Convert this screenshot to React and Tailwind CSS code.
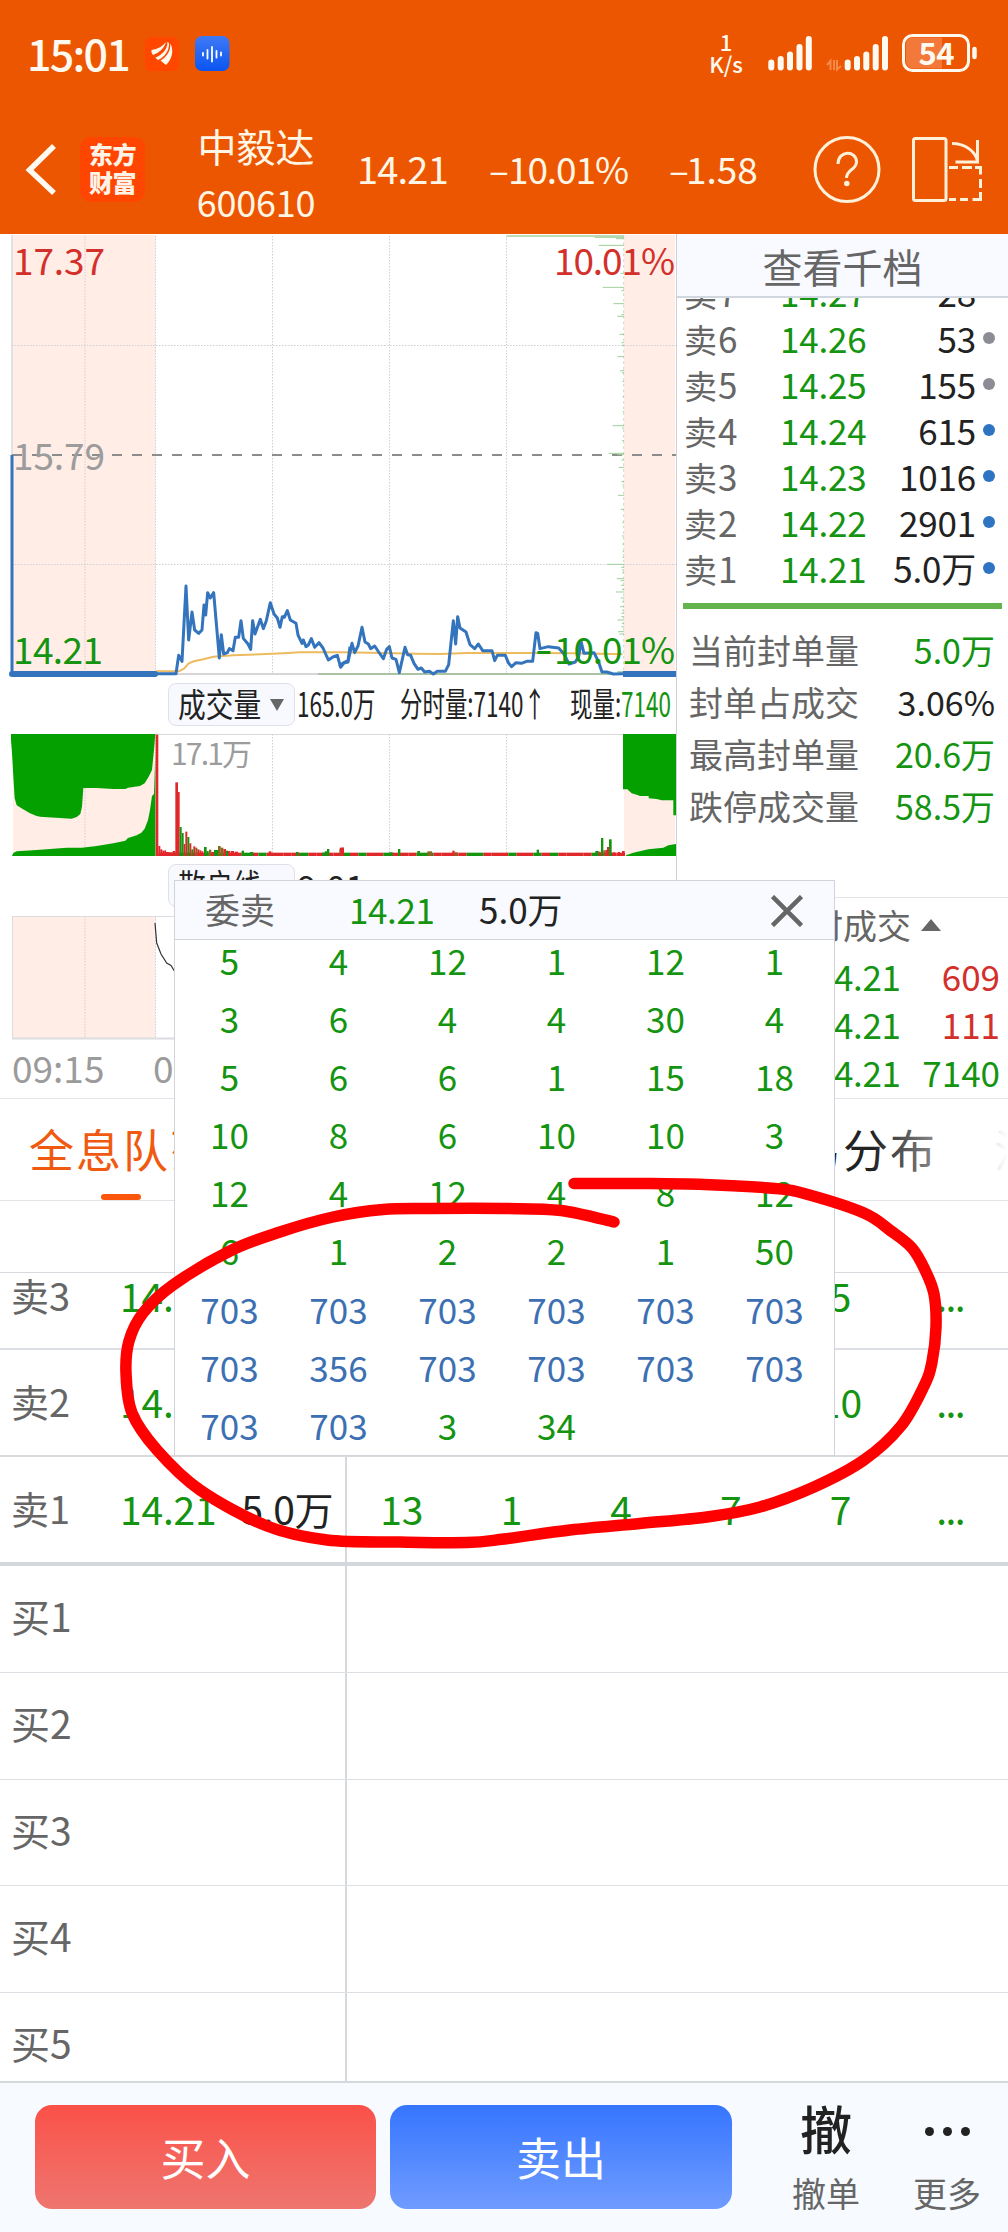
import React from "react";

const PRICE_A =
  "36,675 36,1331 528,1331 536,1276 546,1294 558,1068 566,1230 576,1146 584,1200 596,1210 606,1200 612,1125 617,1155 623,1088 631,1104 641,1088 658,1284 664,1214 671,1272 682,1268 688,1256 699,1262 706,1222 716,1222 723,1172 730,1225 744,1242 752,1258 758,1172 765,1212 781,1168 790,1196 799,1172 811,1118 822,1152 832,1164 840,1192 847,1160 853,1162 862,1142 871,1170 888,1180 894,1215 906,1240 910,1230 918,1250 925,1245 934,1226 944,1252 957,1238 969,1254 977,1272 985,1290 1000,1280 1012,1276 1022,1312 1032,1298 1044,1292 1050,1250";
const PRICE_B =
  "-2,1310 8,1300 24,1296 36,1240 44,1268 54,1248 66,1192 75,1236 85,1242 92,1256 104,1248 116,1266 130,1286 140,1258 148,1250 156,1284 168,1288 178,1328 195,1252 203,1274 212,1276 222,1300 234,1318 244,1314 254,1326 268,1324 280,1332 292,1324 316,1324 326,1304 340,1172 347,1242 353,1160 360,1194 378,1206 390,1244 404,1256 415,1242 428,1262 456,1262 464,1292 472,1276 496,1276 506,1300 515,1310 528,1298 544,1300 560,1294 578,1294 588,1208 593,1210 600,1256 625,1250 656,1254 672,1272 687,1302 706,1296 716,1280 723,1234 732,1270 762,1268 775,1294 786,1326 800,1326 820,1332 850,1331";

const TICKS = [
  [22, 88], [26, 24], [46, 76], [130, 10], [172, 64], [182, 8], [221, 32], [259, 20], [254, 8], [313, 14], [338, 8],
  [346, 6], [380, 20], [422, 12], [428, 6], [455, 5], [500, 4], [545, 4], [587, 34], [594, 6], [632, 6], [670, 46],
  [674, 20], [690, 8], [712, 16], [755, 8], [765, 5], [796, 18], [838, 10], [878, 5], [918, 6], [942, 5], [965, 4],
  [982, 5], [1003, 50], [1012, 8], [1020, 6], [1028, 5], [1046, 22], [1052, 10], [1066, 9], [1078, 6], [1086, 24],
  [1104, 10], [1116, 6], [1130, 12], [1140, 6], [1150, 8], [1160, 8], [1170, 20], [1180, 6], [1190, 8], [1205, 18],
  [1212, 14], [1325, 20], [1328, 16],
];

const RED = "#e0282a";
const GREEN = "#149410";
const MIX = "#87661f";
const VOL_A = [
  [467, 194, 8, RED], [475, 528, 6, RED], [481, 538, 6, RED], [487, 542, 6, RED], [493, 541, 5, RED], [498, 546, 10, RED],
  [508, 547, 10, RED], [518, 543, 8, RED], [526, 337, 8, RED], [533, 366, 6, RED], [539, 471, 6, GREEN], [545, 489, 6, GREEN],
  [551, 522, 5, RED], [556, 485, 6, RED], [562, 501, 6, GREEN], [568, 520, 6, RED], [574, 538, 6, GREEN], [580, 529, 6, RED],
  [586, 533, 6, MIX], [592, 538, 6, RED], [598, 541, 6, RED], [604, 544, 6, RED], [612, 531, 8, GREEN], [620, 543, 6, GREEN],
  [627, 539, 7, MIX], [634, 546, 8, RED], [642, 540, 12, GREEN], [654, 528, 8, MIX], [662, 533, 8, MIX], [670, 537, 8, RED],
  [678, 542, 6, GREEN], [684, 543, 6, RED], [692, 543, 10, RED], [704, 545, 10, RED], [725, 542, 7, GREEN], [750, 546, 10, GREEN],
  [806, 544, 8, RED], [888, 546, 8, GREEN], [966, 548, 8, GREEN], [974, 544, 7, GREEN], [981, 537, 7, GREEN], [1018, 536, 6, MIX],
  [1024, 533, 8, RED],
];
const VOL_B = [
  [0, 533, 12, RED], [148, 547, 10, GREEN], [174, 537, 7, GREEN], [232, 543, 8, GREEN], [262, 544, 14, MIX], [337, 542, 7, RED],
  [344, 547, 8, MIX], [590, 539, 7, GREEN], [766, 543, 10, GREEN], [776, 545, 6, RED], [783, 504, 7, GREEN], [790, 541, 6, MIX],
  [796, 540, 6, RED], [801, 531, 6, RED], [807, 508, 8, GREEN], [818, 547, 8, RED], [834, 546, 6, RED], [846, 543, 8, RED],
];

// A base row of short alternating bars along the bottom of the volume pane.
const BASE = Array.from({ length: 56 }, (_, i) => [475 + i * 25, i % 5 === 2 || i % 7 === 3 ? GREEN : RED]);

const RING = [
  [574, 1183.5], [640, 1183.5], [704, 1184.5], [775, 1188.5], [806, 1194], [864, 1213], [891, 1231], [912, 1248], [925, 1270],
  [934, 1294], [936, 1327], [932, 1362], [924, 1386], [901, 1426], [864, 1460], [814, 1487], [760, 1507], [707, 1517],
  [640, 1523.5], [570, 1530], [504, 1539], [467, 1542.5], [400, 1542], [327, 1540], [267, 1526], [200, 1490], [157, 1450],
  [132, 1413], [126, 1373], [129, 1341], [143, 1313], [173, 1285], [230, 1251], [280, 1232], [333, 1217], [383, 1209.5],
  [430, 1208.5], [504, 1208.5], [561, 1210.5], [614, 1222],
];

function smooth(pts) {
  let d = `M${pts[0][0]} ${pts[0][1]}`;
  for (let i = 0; i < pts.length - 1; i++) {
    const a = pts[i - 1] || pts[i];
    const b = pts[i];
    const c = pts[i + 1];
    const e = pts[i + 2] || c;
    d += `C${b[0] + (c[0] - a[0]) / 6} ${b[1] + (c[1] - a[1]) / 6} ${c[0] - (e[0] - b[0]) / 6} ${c[1] - (e[1] - b[1]) / 6} ${c[0]} ${c[1]}`;
  }
  return d;
}

function StatusBar() {
  return (
    <div className="flex h-[108px] items-start text-[#fffaf0]">
      <div className="ml-[27px] mt-[30px] w-[118px] text-[43px] font-medium leading-[44px] tracking-[-1.8px]">15:01</div>
      <svg className="mt-[37px]" width="34" height="34" viewBox="0 0 34 34">
        <rect width="34" height="34" rx="6" fill="#ff4700" />
        <g fill="#fff8ec">
          <path d="M6.500 13 C13 12 18 9 21 5 C19.500 11 14 16 8 18 C6.500 16.500 6.300 14.800 6.500 13z" />
          <path d="M22.300 5 C23 12 17 18 10.500 20.500 C10.800 21 12 22.500 13 23 C20 20 24.500 13 24 6z" />
          <path d="M25.300 6.500 C26 14 21 20.500 15.500 23.500 L21 28 C26.500 23 29.500 14 25.300 6.500z" />
        </g>
      </svg>
      <svg className="ml-4 mt-9" width="35" height="35" viewBox="0 0 35 35">
        <defs>
          <linearGradient id="voice" x1="0" y1="0" x2="0" y2="1">
            <stop offset="0" stopColor="#3f79f5" />
            <stop offset="1" stopColor="#0a55f2" />
          </linearGradient>
        </defs>
        <rect width="34.500" height="35" rx="7" fill="url(#voice)" />
        <path d="M8 17v2.500M12.500 14v8.500M17 11v14.500M21.500 15v6.500M26 16.500v3" stroke="#fff" strokeWidth="1.800" strokeLinecap="round" />
      </svg>
      <div className="ml-[478px] mt-[31px] flex w-[36px] flex-col items-center text-[22px] font-medium leading-[21.500px]">
        <span>1</span>
        <span>K/s</span>
      </div>
      <svg className="ml-[22px] mt-[30px]" width="216" height="48" viewBox="766 30 216 48">
        <g stroke="#fffaf0" strokeWidth="6" strokeLinecap="round">
          <path d="M771.300 62.500v5M780.700 59v8.500M790 54.500v13M799.500 47v20.500M808.800 39v28.500" />
          <path d="M847.700 62.500v5M857 59v8.500M866.300 54.500v13M875.700 47v20.500M885 39v28.500" />
        </g>
        <path d="M827 65l3.500-4v9M834 60v10M837 60v9.500l4-3.500" fill="none" stroke="#f58a4a" strokeWidth="2" />
        <rect x="903.500" y="35.500" width="65" height="35" rx="9" fill="none" stroke="#fffaf0" strokeWidth="3" />
        <path d="M942 37.500h-29a7 7 0 0 0-7 7v17a7 7 0 0 0 7 7h29z" fill="#f2793a" />
        <path d="M974.500 49v8" stroke="#fffaf0" strokeWidth="4.500" strokeLinecap="round" />
        <text x="918.500" y="64.500" fontSize="31" fontWeight="700" fill="#fffaf0" textLength="36">54</text>
      </svg>
    </div>
  );
}

function NavBar() {
  return (
    <div className="flex h-[126px] items-start text-[#fff6e6]">
      <svg className="ml-[22px] mt-[30px]" width="40" height="64" viewBox="22 138 40 64">
        <path d="M54 146 L29.500 170 L54 193" fill="none" stroke="#fffaf2" strokeWidth="5.500" />
      </svg>
      <div className="ml-[18px] mt-[29px] flex h-[65px] w-[65px] flex-col items-center justify-center rounded-[11px] bg-[#ff4600] pb-1 text-[24px] font-black leading-[28px] tracking-[-0.5px] text-[#fff3e8]">
        <span>东方</span>
        <span>财富</span>
      </div>
      <div className="ml-[39px] mt-[9px] flex w-[144px] flex-col items-center">
        <span className="h-[56px] text-[39px] leading-[56px]">中毅达</span>
        <span className="text-[36px] leading-[56px] tracking-[-0.2px]">600610</span>
      </div>
      <div className="ml-[29px] mt-[34px] w-[132px] text-[38px] leading-[52px] tracking-[-0.8px]">14.21</div>
      <div className="mt-[34px] w-[180px] text-[37px] leading-[52px] tracking-[-1.1px]"><span className="mr-[1px] inline-block w-[18px] text-center">–</span>10.01%</div>
      <div className="mt-[34px] w-[140px] text-[37px] leading-[52px]"><span className="mr-[-1px] inline-block w-[18px] text-center">–</span>1.58</div>
      <svg className="mt-[26px]" width="180" height="70" viewBox="811 134 180 70">
        <g fill="none" stroke="#fff0da" strokeWidth="3">
          <circle cx="849" cy="169.500" r="32" />
          <path d="M840 164 C840 150 858.500 150 858.500 162 C858.500 170 848.500 169 848.500 178" />
          <rect x="915.500" y="138.500" width="32.500" height="62" rx="2" />
          <path d="M954 143.500 C968 143.500 977.500 152 979.500 161M979.500 140v22h-22" />
          <path d="M951 167.500h9M964 167.500h10M977 167.500h5.500v7M982.500 179v9M982.500 192v7.500h-8M970 199.500h-8M958 199.500h-7" />
        </g>
        <circle cx="848.800" cy="183.500" r="2.800" fill="#fff0da" />
      </svg>
    </div>
  );
}

function Grid({ top, bottom }) {
  return (
    <g stroke="#cfcfd4" strokeWidth="1" strokeDasharray="1.500 1.500">
      {[85, 155.500, 272.500, 389.500, 506.500].map((x) => (
        <path key={x} d={`M${x} ${top}V${bottom}`} />
      ))}
    </g>
  );
}

function PriceChart() {
  return (
    <svg className="block" width="676" height="446" viewBox="0 234 676 446" fontSize="37">
      <rect x="13" y="235" width="142.500" height="438" fill="#ffede6" />
      <rect x="624" y="235" width="51" height="438" fill="#ffede6" />
      <path d="M12 235V674" stroke="#d9d9de" strokeWidth="1.500" />
      <Grid top={236} bottom={674} />
      <path d="M12 345.500H676M12 564.500H676" stroke="#cfcfd4" strokeDasharray="1.500 1.500" />
      <path d="M12 455H676" stroke="#8c8c8c" strokeWidth="2" strokeDasharray="10 10" />
      <path d="M155 674H320" stroke="#d6d6d6" strokeWidth="2" />
      <path d="M318 674H624" stroke="#a9c3a4" strokeWidth="2" />
      <path d="M506.500 236H624" stroke="#bcdcb6" strokeWidth="2" />
      <g transform="translate(340 230) scale(0.33333)" stroke="#9fcf9c" strokeWidth="3">
        {TICKS.map(([y, w], i) => (
          <path key={i} d={`M${852 - w} ${y}H852`} />
        ))}
        <path d="M851 20V1330" strokeWidth="2" strokeDasharray="8 9" />
      </g>
      <g fill="none" stroke="#ecbb5e" strokeWidth="6" strokeLinejoin="round">
        <polyline transform="translate(0 230) scale(0.33333)" points="467,1324 536,1324 552,1316 566,1300 584,1293 610,1288 640,1280 700,1276 780,1273 850,1270 900,1267 1020,1267 1150,1269 1250,1271 1320,1272 1400,1269 1600,1269 1720,1270 1800,1271 1868,1273" />
      </g>
      <g fill="none" stroke="#3474bd" strokeLinejoin="round">
        <polyline transform="translate(0 230) scale(0.33333)" strokeWidth="9" points={PRICE_A} />
        <polyline transform="translate(340 230) scale(0.33333)" strokeWidth="9" points={PRICE_B} />
        <path d="M12 674H155" strokeWidth="6" strokeLinecap="round" />
        <path d="M623 674H676" strokeWidth="6" />
      </g>
      <text x="13" y="275" fill="#d3302b" textLength="92">17.37</text>
      <text x="13" y="470" fill="#9c9c9c" textLength="92">15.79</text>
      <text x="13" y="664" fill={GREEN} textLength="90">14.21</text>
      <text x="554" y="275" fill="#d3302b" textLength="121">10.01%</text>
      <text x="554" y="664" fill={GREEN} textLength="121">10.01%</text>
      <path d="M537.500 652.500h13" stroke={GREEN} strokeWidth="3" />
    </svg>
  );
}

function VolumeChart() {
  return (
    <svg className="block" width="676" height="124" viewBox="0 733 676 124">
      <rect x="13" y="734" width="142.500" height="122" fill="#ffede6" />
      <rect x="624" y="734" width="51" height="122" fill="#ffede6" />
      <path d="M12 734.500H676" stroke="#d9d9de" />
      <Grid top={734} bottom={856} />
      <g transform="translate(0 670) scale(0.33333)" fill="#03a000">
        <path d="M33 192H466L462 240 456 300 446 320 434 340 420 348 384 353 376 357H340L290 354H250L246 410 241 432 230 441 215 446 120 440 108 437 90 430 68 417 50 406 44 385 40 320 36 250 33 210z" />
        <path d="M36 558L40 549 50 544 110 540 160 536 200 533H245L290 528 340 520 376 512 384 504 410 496 424 488 434 476 444 450 450 420 456 378 462 372 466 250V558z" />
        {BASE.map(([x, c]) => (
          <rect key={x} x={x} y="548" width="25" height="10" fill={c} />
        ))}
        {VOL_A.map(([x, y, w, c], i) => (
          <rect key={i} x={x} y={y} width={w} height={558 - y} fill={c} />
        ))}
      </g>
      <g transform="translate(340 670) scale(0.33333)">
        {VOL_B.map(([x, y, w, c], i) => (
          <rect key={i} x={x} y={y} width={w} height={558 - y} fill={c} />
        ))}
        <path d="M849 192H1008V436H1000V391H965L950 387 926 385V378L900 378 890 374 875 370 862 358H849z" fill="#03a000" />
        <path d="M858 556L880 548 925 538 970 533 985 526 1008 522V558H858z" fill="#03a000" />
      </g>
      <text x="171" y="765" fontSize="30" fill="#9c9c9c" textLength="81">17.1万</text>
    </svg>
  );
}

function Selector({ label }) {
  return (
    <div className="flex h-[43px] w-[127px] shrink-0 items-center rounded-lg border border-[#dfe1ea] bg-[#f7f9ff] pl-[9px]">
      <span className="inline-block w-[84px] origin-left scale-x-[0.84] whitespace-nowrap pb-1 text-[33px] leading-[36px] text-[#222]">{label}</span>
      <svg className="ml-[8px]" width="14" height="12" viewBox="0 0 14 12">
        <path d="M0 0H14L7 12z" fill="#666" />
      </svg>
    </div>
  );
}

function ChartColumn() {
  return (
    <div className="flex w-[677px] shrink-0 flex-col border-r border-[#cdd0d6]">
      <PriceChart />
      <div className="flex h-[53px] items-start pl-[168px] pt-[3px] text-[34px] text-[#222]">
        <Selector label="成交量" />
        <span className="ml-[2px] w-[103px] origin-left scale-x-[0.66] whitespace-nowrap leading-[39px]">165.0万</span>
        <span className="w-[170px] origin-left scale-x-[0.66] whitespace-nowrap leading-[39px]">分时量:7140<span className="inline-block w-[34px] text-center">↑</span></span>
        <span className="w-[100px] origin-left scale-x-[0.66] whitespace-nowrap leading-[39px]">现量:<span className="text-[#149410]">7140</span></span>
      </div>
      <VolumeChart />
      <div className="flex h-[58px] items-start pl-[168px] pt-[7px] text-[#222]">
        <Selector label="散户线" />
        <span className="ml-[2px] text-[35px] leading-[44px]">9.01</span>
      </div>
      <svg className="block" width="676" height="125" viewBox="0 915 676 125">
        <rect x="12.500" y="916.500" width="664" height="122" fill="#fff" stroke="#dcdce1" />
        <rect x="13" y="917" width="142.500" height="121" fill="#ffede6" />
        <Grid top={916} bottom={1038} />
        <path d="M12 1038.500H676" stroke="#dcdce1" strokeWidth="2" />
        <path d="M155 923L156.700 943 161 954 166.700 963 171 965.500 175 972 182 985" fill="none" stroke="#333" strokeWidth="1.200" />
      </svg>
      <div className="flex pl-[12px] pt-[2px] text-[37px] leading-[50px] text-[#9b9b9b]">
        <span className="w-[141px]">09:15</span>
        <span>09:30</span>
      </div>
    </div>
  );
}

const LEVELS = [
  ["卖7", "14.27", "28", ""],
  ["卖6", "14.26", "53", "bg-[#8c8c94]"],
  ["卖5", "14.25", "155", "bg-[#8c8c94]"],
  ["卖4", "14.24", "615", "bg-[#2f74c2]"],
  ["卖3", "14.23", "1016", "bg-[#2f74c2]"],
  ["卖2", "14.22", "2901", "bg-[#2f74c2]"],
  ["卖1", "14.21", "5.0万", "bg-[#2f74c2]"],
];
const STATS = [
  ["当前封单量", "5.0万", "text-[#149410]"],
  ["封单占成交", "3.06%", "text-[#222]"],
  ["最高封单量", "20.6万", "text-[#149410]"],
  ["跌停成交量", "58.5万", "text-[#149410]"],
];
const TRADES = [
  ["609", "text-[#d3302b]"],
  ["111", "text-[#d3302b]"],
  ["7140", "text-[#149410]"],
];

function QuoteColumn() {
  return (
    <div className="flex flex-1 flex-col">
      <div className="flex h-[64px] items-center justify-center border-b-2 border-[#d0d7de] bg-[#f8faff] pt-[2px] text-[40px] leading-none text-[#666]">查看千档</div>
      <div className="h-[305px] overflow-hidden">
        <div className="-mt-[29px]">
          {LEVELS.map(([n, p, q, dot]) => (
            <div key={n} className="flex h-[46px] items-center pl-[7px] pr-[13px] text-[35px] leading-[46px]">
              <span className="w-[96px] text-[33px] text-[#666]"><span>{n[0]}</span><span className="ml-[1px] text-[35px]">{n[1]}</span></span>
              <span className="w-[90px] tracking-[-0.2px] text-[#149410]">{p}</span>
              <span className="flex-1 text-right tracking-[-0.2px] text-[#222]">{q}</span>
              <span className={`ml-[7px] size-3 rounded-full ${dot}`} />
            </div>
          ))}
        </div>
      </div>
      <div className="ml-[6px] mr-[6px] h-[6px] bg-[#63b44c]" />
      <div className="mt-[15px]">
        {STATS.map(([k, v, c]) => (
          <div key={k} className="flex h-[52px] items-center justify-between pl-[12px] pr-[13px] leading-[52px]">
            <span className="text-[34px] text-[#666]">{k}</span>
            <span className={`text-[34px] ${c}`}>{v}</span>
          </div>
        ))}
      </div>
      <div className="mt-[65px] flex h-[55px] items-center border-t border-[#e3e5e8] pl-[98px] text-[34px] leading-[50px] text-[#666]">
        <span>分时成交</span>
        <svg className="ml-[10px]" width="20" height="12" viewBox="0 0 20 12">
          <path d="M0 12H20L10 0z" fill="#666" />
        </svg>
      </div>
      {TRADES.map(([q, c]) => (
        <div key={q} className="flex h-[48px] items-center justify-between pl-[138px] pr-[8px] text-[35px] leading-[48px]">
          <span className="tracking-[-0.4px] text-[#149410]">14.21</span>
          <span className={c}>{q}</span>
        </div>
      ))}
    </div>
  );
}

function Tabs() {
  return (
    <div className="relative flex h-[103px] shrink-0 overflow-hidden border-b border-t border-[#e2e4e8] text-[45px] leading-[100px] tracking-[2px]">
      <div className="ml-[29px] w-[720px] shrink-0">
        <span className="text-[#f05a10]">全息队列</span>
        <div className="-mt-[5px] ml-[72px] h-[6px] w-[40px] rounded-full bg-[#fb560c]" />
      </div>
      <span className="w-[245px] shrink-0 whitespace-nowrap text-[#222]">交易分布</span>
      <span className="shrink-0 text-[#222]">流</span>
      <div className="absolute right-0 top-0 h-full w-[136px] bg-linear-to-r from-white/0 to-white" />
    </div>
  );
}

const ASKS = [
  ["卖3", "14.23", "1016", ["8", "2", "6", "1", "5"], "h-[77px]", "-mt-[29px]", "border-b-2 border-[#dcdee6]"],
  ["卖2", "14.22", "2901", ["2", "5", "8", "3", "10"], "h-[107px]", "", "border-b-2 border-[#d8dade]"],
  ["卖1", "14.21", "5.0万", ["13", "1", "4", "7", "7"], "h-[109px]", "", "border-b-4 border-[#d3d8de]"],
];

function Depth() {
  return (
    <div className="flex flex-1 flex-col overflow-hidden">
      <div className="h-[72px] shrink-0 border-b border-[#d6d9de]" />
      {ASKS.map(([n, p, q, cells, h, shift, border]) => (
        <div key={n} className={`flex shrink-0 overflow-hidden text-[39px] leading-[102px] ${h} ${border}`}>
          <div className={`flex w-[347px] shrink-0 justify-between pl-[11px] pr-[12px] ${h === "h-[77px]" ? "" : "border-r-2 border-[#d5d8dd]"}`}>
            <span className={`w-[109px] text-[38px] text-[#666] ${shift}`}>{n}</span>
            <span className={`w-[110px] tracking-[-0.2px] text-[#149410] ${shift}`}>{p}</span>
            <span className={`flex-1 text-right tracking-[-0.4px] text-[#222] ${shift}`}>{q}</span>
          </div>
          <div className={`grid w-[658px] grid-cols-6 text-center text-[#149410] ${shift}`}>
            {cells.map((c, i) => (
              <span key={i}>{c}</span>
            ))}
            <span className="tracking-[-1.500px]">...</span>
          </div>
        </div>
      ))}
      {["买1", "买2", "买3", "买4", "买5"].map((n) => (
        <div key={n} className="flex h-[106.800px] shrink-0 border-b border-[#dcdfe3] text-[39px] leading-[98px] text-[#666]">
          <div className="w-[347px] border-r-2 border-[#d5d8dd] pl-[11px]">{n}</div>
        </div>
      ))}
    </div>
  );
}

function BottomBar() {
  return (
    <div className="flex h-[151px] shrink-0 items-start border-t-2 border-[#d5d9de] bg-[#f7faff] pl-[35px] pt-[22px]">
      <div className="flex h-[104px] w-[341px] items-center justify-center rounded-[17px] bg-linear-to-b from-[#fa5048] to-[#ee756f] pb-[1px] text-[45px] leading-none text-white">买入</div>
      <div className="ml-[14px] flex h-[104px] w-[342px] items-center justify-center rounded-[17px] bg-linear-to-b from-[#3575ff] to-[#6f9bff] pb-[1px] text-[45px] leading-none text-white">卖出</div>
      <div className="ml-[49px] flex w-[90px] flex-col items-center">
        <span className="text-[52px] font-medium leading-[46px] text-[#222]">撤</span>
        <span className="mt-[25px] text-[34px] leading-[34px] text-[#666]">撤单</span>
      </div>
      <div className="ml-[31px] flex w-[90px] flex-col items-center">
        <div className="flex h-[46px] items-center gap-[9px] pt-[7px]">
          <i className="size-[9px] rounded-full bg-[#222]" />
          <i className="size-[9px] rounded-full bg-[#222]" />
          <i className="size-[9px] rounded-full bg-[#222]" />
        </div>
        <span className="mt-[25px] text-[34px] leading-[34px] text-[#666]">更多</span>
      </div>
    </div>
  );
}

const QUEUE = [
  5, 4, 12, 1, 12, 1, 3, 6, 4, 4, 30, 4, 5, 6, 6, 1, 15, 18, 10, 8, 6, 10, 10, 3, 12, 4, 12, 4, 8, 12, 6, 1, 2, 2, 1, 50,
  703, 703, 703, 703, 703, 703, 703, 356, 703, 703, 703, 703, 703, 703, 3, 34,
];

function QueuePopup() {
  return (
    <div className="absolute left-[174px] top-[880px] h-[576px] w-[661px] overflow-hidden border border-[#d2d4da] bg-white">
      <div className="relative flex h-[59px] items-center border-b border-[#d2d4da] bg-[#f8faff] pb-[3px] text-[35px] leading-[56px]">
        <span className="ml-[30px] w-[144px] text-[#666]">委卖</span>
        <span className="w-[130px] tracking-[-0.4px] text-[#149410]">14.21</span>
        <span className="w-[118px] text-[#222]">5.0万</span>
        <svg className="relative top-[2px] ml-[174px]" width="32" height="32" viewBox="0 0 32 32">
          <path d="M1.500 1.500L30.500 30.500M30.500 1.500L1.500 30.500" stroke="#666" strokeWidth="4.500" />
        </svg>
      </div>
      <div className="-mt-[9px] grid w-[654px] grid-cols-6 text-center text-[35px] leading-[58.100px]">
        {QUEUE.map((n, i) => (
          <span key={i} className={n > 100 ? "text-[#3c70b2]" : "text-[#149410]"}>
            {n}
          </span>
        ))}
      </div>
    </div>
  );
}

export default function App() {
  return (
    <div className="relative flex h-[2232px] w-[1008px] flex-col overflow-hidden bg-white font-['Noto_Sans_CJK_SC',sans-serif]">
      <header className="h-[234px] shrink-0 bg-[#ed5600]">
        <StatusBar />
        <NavBar />
      </header>
      <main className="flex h-[864px] shrink-0">
        <ChartColumn />
        <QuoteColumn />
      </main>
      <Tabs />
      <Depth />
      <BottomBar />
      <QueuePopup />
      <svg className="pointer-events-none absolute left-0 top-0" width="1008" height="2232" viewBox="0 0 1008 2232">
        <path d={smooth(RING)} fill="none" stroke="#ff0000" strokeWidth="11.500" strokeLinecap="round" />
      </svg>
    </div>
  );
}
